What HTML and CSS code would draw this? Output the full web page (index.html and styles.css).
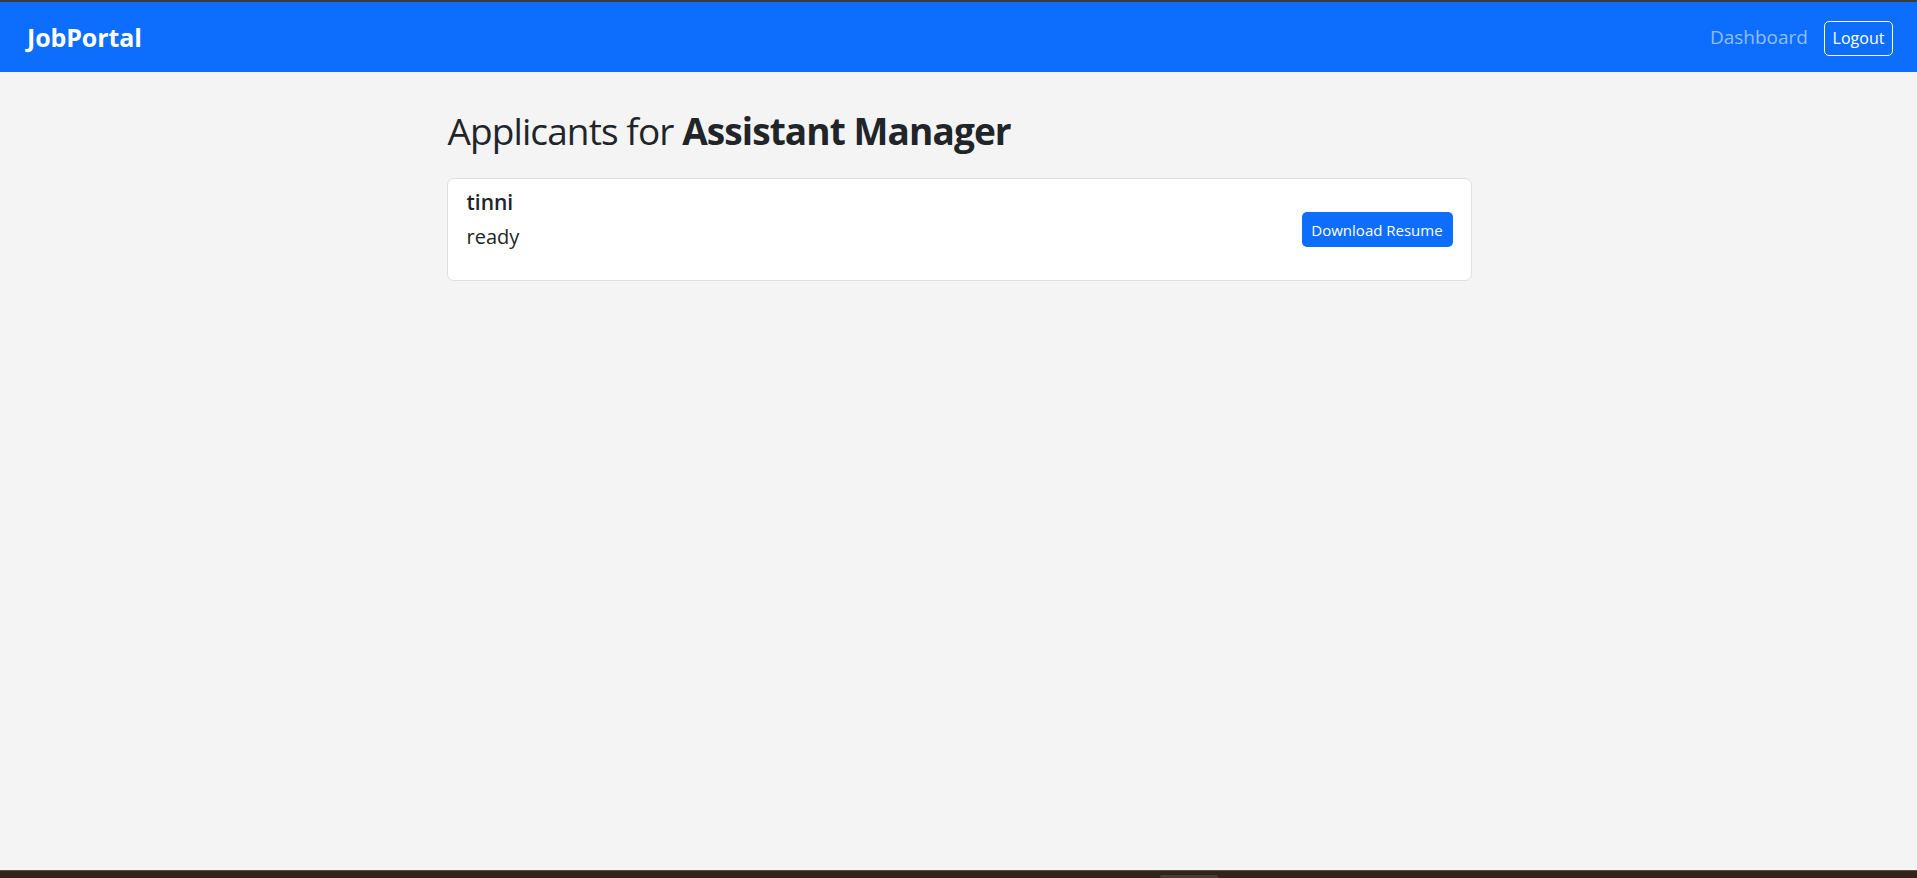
FILE: index.html
```html
<!DOCTYPE html>
<html lang="en">
<head>
<meta charset="utf-8">
<title>JobPortal - Applicants</title>
<link rel="stylesheet" href="styles.css">
</head>
<body>
<div class="page">
  <nav class="navbar">
    <a class="brand" href="#">JobPortal</a>
    <div class="nav-right">
      <a class="nav-link" href="#">Dashboard</a>
      <a class="btn-logout" href="#">Logout</a>
    </div>
  </nav>
  <main class="main">
    <div class="container">
      <h2 class="title">Applicants for <b>Assistant Manager</b></h2>
      <div class="card">
        <div class="card-info">
          <h5 class="name">tinni</h5>
          <p class="status">ready</p>
        </div>
        <a class="btn-download" href="#">Download Resume</a>
      </div>
    </div>
  </main>
  <div class="taskbar"><span class="tab"></span></div>
</div>
</body>
</html>
```

FILE: styles.css
```css
* { box-sizing: border-box; }
html, body { margin: 0; padding: 0; }
body {
  font-family: "Segoe UI", "Open Sans", "Noto Sans", sans-serif;
  color: #212529;
  background: #f4f4f4;
}
a { text-decoration: none; }
.page {
  height: 878px;
  display: flex;
  flex-direction: column;
  border-top: 2px solid #3a3a3a;
}
.navbar {
  height: 70px;
  flex: none;
  background: #0d6efd;
  display: flex;
  align-items: center;
  justify-content: space-between;
  padding: 0 24px 0 27px;
}
.brand {
  color: #fff;
  font-weight: 700;
  font-size: 25px;
  letter-spacing: -0.1px;
}
.nav-right {
  display: flex;
  align-items: center;
  gap: 16px;
}
.nav-link {
  color: rgba(255,255,255,0.55);
  font-size: 19px;
}
.btn-logout {
  color: #fff;
  border: 1px solid #f8f9fa;
  border-radius: 5px;
  font-size: 16px;
  height: 35px;
  width: 69px;
  margin-top: 2px;
  display: flex;
  align-items: center;
  justify-content: center;
}
.main {
  flex: 1;
}
.container {
  width: 1026px;
  margin: 0 auto;
  padding: 35px 0 0 1px;
}
.title {
  margin: 0 0 23px 1px;
  font-size: 37px;
  font-weight: 400;
  line-height: 48px;
  letter-spacing: -0.9px;
}
.title b { font-weight: 700; }
.card {
  background: #fff;
  border: 1px solid #dedfe0;
  border-radius: 7px;
  height: 103px;
  padding: 8px 18px 20px 19px;
  display: flex;
  align-items: center;
  justify-content: space-between;
}
.card-info { align-self: flex-start; }
.name {
  margin: 0 0 5px;
  font-size: 21px;
  font-weight: 600;
  line-height: 30px;
}
.status {
  margin: 0;
  font-size: 20px;
  line-height: 30px;
}
.btn-download {
  margin-top: 12px;
  background: #0d6efd;
  color: #fff;
  border-radius: 5px;
  font-size: 15px;
  width: 151px;
  height: 35px;
  display: flex;
  align-items: center;
  justify-content: center;
}
.taskbar {
  height: 8px;
  flex: none;
  background: #32241a;
  border-top: 1px solid #5a5048;
  position: relative;
}
.tab {
  position: absolute;
  left: 1160px;
  top: 4px;
  width: 58px;
  height: 3px;
  background: #4a3e34;
  border-radius: 2px 2px 0 0;
}
```
